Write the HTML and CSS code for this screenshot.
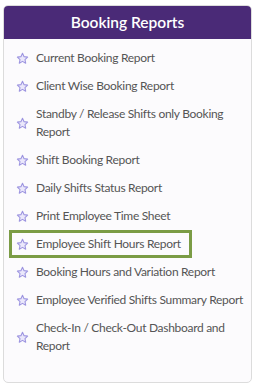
FILE: index.html
```html
<!DOCTYPE html>
<html lang="en">
<head>
    <meta charset="UTF-8">
    <meta name="viewport" content="width=device-width, initial-scale=1.0">
    <title>Booking Reports</title>
    <link rel="stylesheet" href="styles.css">
</head>
<body>
    <div class="panel">
        <div class="panel-header">Booking Reports</div>
        <ul class="report-list">
            <li class="report"><svg class="star" viewBox="0 0 24 24"><path d="M12 2.5l2.9 6.1 6.6.8-4.9 4.6 1.3 6.6L12 17.3l-5.9 3.3 1.3-6.6-4.9-4.6 6.6-.8z"/></svg><span>Current Booking Report</span></li>
            <li class="report"><svg class="star" viewBox="0 0 24 24"><path d="M12 2.5l2.9 6.1 6.6.8-4.9 4.6 1.3 6.6L12 17.3l-5.9 3.3 1.3-6.6-4.9-4.6 6.6-.8z"/></svg><span>Client Wise Booking Report</span></li>
            <li class="report"><svg class="star" viewBox="0 0 24 24"><path d="M12 2.5l2.9 6.1 6.6.8-4.9 4.6 1.3 6.6L12 17.3l-5.9 3.3 1.3-6.6-4.9-4.6 6.6-.8z"/></svg><span>Standby / Release Shifts only Booking Report</span></li>
            <li class="report"><svg class="star" viewBox="0 0 24 24"><path d="M12 2.5l2.9 6.1 6.6.8-4.9 4.6 1.3 6.6L12 17.3l-5.9 3.3 1.3-6.6-4.9-4.6 6.6-.8z"/></svg><span>Shift Booking Report</span></li>
            <li class="report"><svg class="star" viewBox="0 0 24 24"><path d="M12 2.5l2.9 6.1 6.6.8-4.9 4.6 1.3 6.6L12 17.3l-5.9 3.3 1.3-6.6-4.9-4.6 6.6-.8z"/></svg><span>Daily Shifts Status Report</span></li>
            <li class="report"><svg class="star" viewBox="0 0 24 24"><path d="M12 2.5l2.9 6.1 6.6.8-4.9 4.6 1.3 6.6L12 17.3l-5.9 3.3 1.3-6.6-4.9-4.6 6.6-.8z"/></svg><span>Print Employee Time Sheet</span></li>
            <li class="report report-active"><svg class="star" viewBox="0 0 24 24"><path d="M12 2.5l2.9 6.1 6.6.8-4.9 4.6 1.3 6.6L12 17.3l-5.9 3.3 1.3-6.6-4.9-4.6 6.6-.8z"/></svg><span>Employee Shift Hours Report</span></li>
            <li class="report"><svg class="star" viewBox="0 0 24 24"><path d="M12 2.5l2.9 6.1 6.6.8-4.9 4.6 1.3 6.6L12 17.3l-5.9 3.3 1.3-6.6-4.9-4.6 6.6-.8z"/></svg><span>Booking Hours and Variation Report</span></li>
            <li class="report"><svg class="star" viewBox="0 0 24 24"><path d="M12 2.5l2.9 6.1 6.6.8-4.9 4.6 1.3 6.6L12 17.3l-5.9 3.3 1.3-6.6-4.9-4.6 6.6-.8z"/></svg><span>Employee Verified Shifts Summary Report</span></li>
            <li class="report"><svg class="star" viewBox="0 0 24 24"><path d="M12 2.5l2.9 6.1 6.6.8-4.9 4.6 1.3 6.6L12 17.3l-5.9 3.3 1.3-6.6-4.9-4.6 6.6-.8z"/></svg><span>Check-In / Check-Out Dashboard and Report</span></li>
        </ul>
    </div>
</body>
</html>
```

FILE: styles.css
```css
body {
    margin: 0;
    padding: 5px 5px 4px 3px;
    background-color: #fff;
    font-family: Lato, "Open Sans", sans-serif;
}

.panel {
    width: 249px;
    height: 378px;
    box-sizing: border-box;
    background-color: #fcfbfd;
    border: 1px solid #dcdcdc;
    border-radius: 5px;
    overflow: hidden;
}

.panel-header {
    background-color: #4a2a77;
    color: #fff;
    height: 34px;
    line-height: 34px;
    margin: -1px -1px 0;
    text-align: center;
    font-size: 15.5px;
    font-weight: 600;
}

.report-list {
    list-style: none;
    margin: 0;
    padding: 5px 0 0;
}

.report {
    display: flex;
    align-items: center;
    gap: 7px;
    width: fit-content;
    padding: 5px 8px 5px 12px;
    color: #555;
    font-size: 12px;
    line-height: 18px;
    letter-spacing: -0.3px;
}

.report-active {
    margin-left: 5px;
    padding: 2px 8px 2px 4px;
    border: 3px solid #7b9c45;
}

.star {
    flex: none;
    width: 13px;
    height: 13px;
    fill: #ebe8fb;
    stroke: #9d95e0;
    stroke-width: 2;
    stroke-linejoin: round;
}
```
